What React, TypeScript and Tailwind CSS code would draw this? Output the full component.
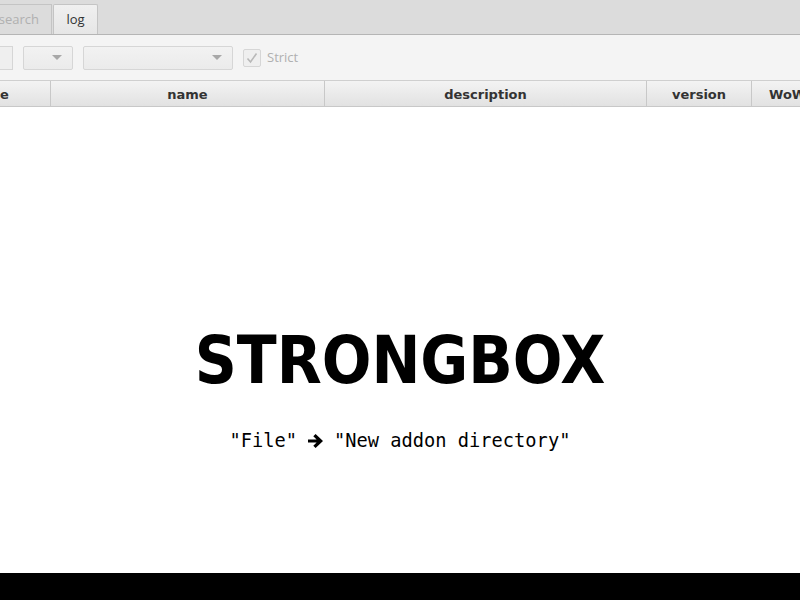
import React from "react";

const columns = [
  { label: "e", width: "w-[51px]", align: "justify-start pl-0" },
  { label: "name", width: "w-[274px]", align: "justify-center" },
  { label: "description", width: "w-[322px]", align: "justify-center" },
  { label: "version", width: "w-[105px]", align: "justify-center" },
  { label: "WoW", width: "w-[60px]", align: "justify-start pl-[17px]" },
];

function Arrow() {
  return (
    <svg width="17" height="16" viewBox="0 0 17 16" className="block">
      <path
        d="M8.6 1 L16 8 L8.6 15 L6.3 12.7 L9.6 9.6 L1 9.6 L1 6.4 L9.6 6.4 L6.3 3.3 Z"
        fill="#000"
      />
    </svg>
  );
}

function Combo({ width }: { width: string }) {
  return (
    <div
      className={`${width} h-[24px] border border-[#d6d6d6] rounded-[2px] bg-gradient-to-b from-[#f2f2f2] to-[#ebebeb] flex items-center justify-end pr-[10px]`}
    >
      <div className="w-0 h-0 border-l-[5px] border-r-[5px] border-t-[5px] border-l-transparent border-r-transparent border-t-[#a8a8a8]" />
    </div>
  );
}

export default function App() {
  return (
    <div className="w-[800px] h-[600px] flex flex-col bg-white overflow-hidden font-['Open_Sans',sans-serif]">
      {/* tab bar */}
      <div className="h-[35px] bg-[#dcdcdc] border-b border-[#b5b5b5] flex items-end">
        <div className="h-[30px] w-[53px] -ml-[1px] border border-b-0 border-[#c4c4c4] bg-[#dcdcdc] flex items-center justify-end pr-[12px] text-[13px] text-[#b0b0b0]">
          search
        </div>
        <div className="h-[30px] w-[45px] ml-[1px] border border-b-0 border-[#c4c4c4] rounded-t-[2px] bg-gradient-to-b from-[#f0f0f0] to-[#e6e6e6] flex items-center justify-center text-[13px] text-[#333]">
          log
        </div>
      </div>

      {/* toolbar */}
      <div className="h-[46px] bg-[#f4f4f4] flex items-center gap-[10px] border-b border-[#cfcfcf]">
        <div className="w-[14px] h-[24px] -ml-[1px] border border-l-0 border-[#d6d6d6] bg-[#efefef]" />
        <Combo width="w-[50px]" />
        <Combo width="w-[150px]" />
        <div className="flex items-center gap-[6px]">
          <div className="w-[18px] h-[18px] border border-[#d6d6d6] rounded-[2px] bg-[#efefef] flex items-center justify-center">
            <svg width="12" height="12" viewBox="0 0 12 12">
              <path d="M1.5 6.5 L4.5 10 L10.5 1.5" stroke="#b8b8b8" strokeWidth="1.6" fill="none" />
            </svg>
          </div>
          <span className="text-[13px] text-[#b0b0b0]">Strict</span>
        </div>
      </div>

      {/* table header */}
      <div className="h-[26px] flex bg-gradient-to-b from-[#f3f3f3] to-[#e2e2e2] border-b border-[#c8c8c8] font-['DejaVu_Sans',sans-serif] font-bold text-[13px] text-[#333] overflow-hidden">
        {columns.map((c) => (
          <div
            key={c.label}
            className={`${c.width} shrink-0 h-full flex items-center pt-[2px] ${c.align} border-r border-[#c8c8c8] whitespace-nowrap`}
          >
            {c.label}
          </div>
        ))}
      </div>

      {/* body */}
      <div className="flex-1 bg-white flex flex-col items-center pt-[221px]">
        <div className="font-['DejaVu_Sans_Condensed','DejaVu_Sans',sans-serif] font-stretch-condensed font-bold text-[65px] leading-none text-black">
          STRONGBOX
        </div>
        <div className="mt-[38px] h-[19px] font-['DejaVu_Sans_Mono',monospace] text-[18.7px] leading-[19px] text-black flex items-center gap-[10px]">
          <span>"File"</span>
          <Arrow />
          <span>"New addon directory"</span>
        </div>
      </div>

      <div className="h-[27px] bg-black" />
    </div>
  );
}
